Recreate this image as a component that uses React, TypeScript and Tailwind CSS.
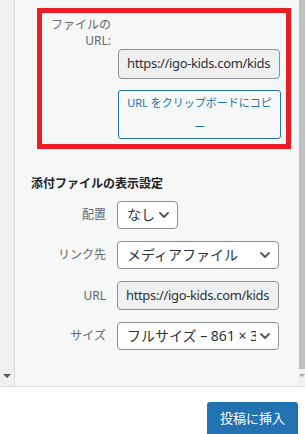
import React from "react";

const Chevron = () => (
  <svg width="10" height="6" viewBox="0 0 10 6" fill="none" className="shrink-0">
    <path d="M1 1l4 4 4-4" stroke="#50575e" strokeWidth="1.8" strokeLinecap="round" strokeLinejoin="round" />
  </svg>
);

function Select({ text, w }: { text: string; w: string }) {
  return (
    <div className={`${w} h-[28px] rounded-[4px] border border-[#8c8f94] bg-white flex items-center pl-[9px] pr-[8px]`}>
      <div className="flex-1 overflow-hidden whitespace-nowrap text-[14px] text-[#2c3338] leading-[26px]">{text}</div>
      <div className="pl-[4px] flex items-center">
        <Chevron />
      </div>
    </div>
  );
}

function Row({ label, children }: { label: string; children: React.ReactNode }) {
  return (
    <div className="flex items-center gap-[11px]">
      <div className="w-[91px] text-right text-[12px] text-[#646970] leading-[16px]">{label}</div>
      {children}
    </div>
  );
}

export default function App() {
  return (
    <div className="w-[305px] h-[434px] overflow-hidden bg-white font-['Noto_Sans','Noto_Sans_CJK_JP',sans-serif]">
      <div className="flex h-[387px] border-b border-[#dcdcde]">
        <div className="w-[15px] bg-[#f0f0f0] border-r border-[#dcdcde] flex flex-col justify-end items-center pb-[8px]">
          <div className="w-0 h-0 border-l-[4px] border-r-[4px] border-t-[4px] border-l-transparent border-r-transparent border-t-[#50575e]" />
        </div>
        <div className="flex-1 bg-[#f6f7f7] flex flex-col pt-[8px]">
          <div className="ml-[22px] w-[254px] border-[5px] border-[#ed1c24] pt-[4px] pb-[5px] grid grid-cols-[69px_163px] gap-x-[7px]">
            <div className="text-right text-[12px] leading-[16px] text-[#646970]">
              ファイルの
              <br />
              URL:
            </div>
            <div />
            <div />
            <div className="w-[162px] h-[30px] rounded-[4px] border border-[#8c8f94] bg-[#f0f0f1] px-[8px] flex items-center overflow-hidden whitespace-nowrap text-[13px] tracking-[-0.35px] text-[#2c3338]">
              https://igo-kids.com/kids
            </div>
            <div />
            <div className="mt-[11px] w-[163px] h-[49px] rounded-[3px] border border-[#2271b1] bg-[#f6f7f7] text-[#2271b1] text-[11px] leading-[24px] text-center whitespace-nowrap">
              URL をクリップボードにコピ
              <br />ー
            </div>
          </div>

          <div className="mt-[27px] pl-[16px] text-[12px] leading-[16px] font-semibold text-[#1d2327]">
            添付ファイルの表示設定
          </div>

          <div className="mt-[9px] flex flex-col gap-[12px]">
            <Row label="配置">
              <Select text="なし" w="w-[61px]" />
            </Row>
            <Row label="リンク先">
              <Select text="メディアファイル" w="w-[162px]" />
            </Row>
            <Row label="URL">
              <div className="w-[162px] h-[29px] rounded-[4px] border border-[#8c8f94] bg-[#f0f0f1] px-[8px] flex items-center overflow-hidden whitespace-nowrap text-[13px] tracking-[-0.35px] text-[#2c3338]">
                https://igo-kids.com/kids
              </div>
            </Row>
            <Row label="サイズ">
              <Select text="フルサイズ – 861 × 315" w="w-[162px]" />
            </Row>
          </div>
        </div>
        <div className="w-[7px] bg-[#f0f0f0] flex flex-col items-end">
          <div className="w-[6px] h-[369px] bg-[#c1c1c1]" />
          <div className="w-full flex justify-center pt-[5px]">
            <div className="w-0 h-0 border-l-[3px] border-r-[3px] border-t-[3px] border-l-transparent border-r-transparent border-t-[#a3a3a3]" />
          </div>
        </div>
      </div>
      <div className="flex justify-end pt-[15px] pr-[7px]">
        <div className="w-[91px] h-[34px] rounded-[3px] bg-[#2271b1] text-white text-[13px] flex items-center justify-center">
          投稿に挿入
        </div>
      </div>
    </div>
  );
}
